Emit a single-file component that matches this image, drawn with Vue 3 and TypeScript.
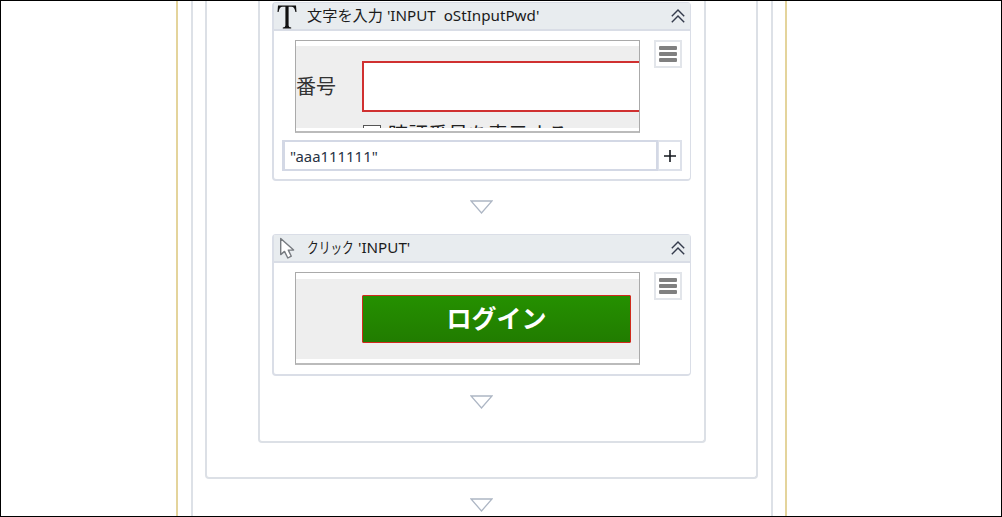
<script setup lang="ts">
interface Activity {
  id: string
  kind: 'type' | 'click'
  action: string
  target: string
  value?: string
}

const activities: Activity[] = [
  { id: 'a1', kind: 'type', action: '文字を入力', target: "'INPUT\u00a0 oStInputPwd'", value: '"aaa111111"' },
  { id: 'a2', kind: 'click', action: 'クリック', target: "'INPUT'" },
]
</script>

<template>
  <main class="viewport">
    <div class="scope">
      <div class="body">
        <section class="sequence">
          <div class="inner">
            <template v-for="a in activities" :key="a.id">
              <article class="card" :class="a.kind">
                <header class="head">
                  <svg v-if="a.kind === 'type'" class="icon" viewBox="0 0 24 28">
                    <path d="M3 3.5H21L21.5 10H20.4Q19.6 4.8 16.5 4.8H13.6V23.6Q13.6 25.4 16.2 25.5V26.5H7.8V25.5Q10.4 25.4 10.4 23.6V4.8H7.5Q4.4 4.8 3.6 10H2.5Z" fill="#111" />
                  </svg>
                  <svg v-else class="icon" viewBox="0 0 24 28">
                    <path d="M5.7 4.5V20.6L9.5 17.4L12.8 24L16.3 22.2L13.3 16.1H18.6Z" fill="#fff" stroke="#777b80" stroke-width="1.4" stroke-linejoin="round" />
                  </svg>
                  <h2 class="title"><span class="act">{{ a.action }}</span><span class="target">{{ a.target }}</span></h2>
                  <svg class="chevron" viewBox="0 0 14 14">
                    <path d="M.8 7.2L7 1L13.2 7.2M.8 13.2L7 7L13.2 13.2" fill="none" stroke="#343b4c" stroke-width="1.4" />
                  </svg>
                </header>
                <div class="content">
                  <div class="shot">
                    <div class="snippet">
                      <template v-if="a.kind === 'type'">
                        <div class="row">
                          <span class="label">番号</span>
                          <span class="field"></span>
                        </div>
                        <div class="option"><span class="check"></span><span class="option-text">暗証番号を表示する</span></div>
                      </template>
                      <div v-else class="login">ログイン</div>
                    </div>
                  </div>
                  <button class="menu" aria-label="menu"><i></i><i></i><i></i></button>
                </div>
                <div v-if="a.value" class="entry">
                  <div class="value">{{ a.value }}</div>
                  <button class="add" aria-label="add">
                    <svg viewBox="0 0 14 14"><path d="M7 1V13M1 7H13" stroke="#15181f" stroke-width="1.6" /></svg>
                  </button>
                </div>
              </article>
              <svg class="arrow" viewBox="0 0 23 14"><path d="M1 1H22L11.5 13Z" fill="#fff" stroke="#adb6c4" stroke-width="1.3" /></svg>
            </template>
          </div>
        </section>
        <svg class="arrow last" viewBox="0 0 23 14"><path d="M1 1H22L11.5 13Z" fill="#fff" stroke="#adb6c4" stroke-width="1.3" /></svg>
      </div>
    </div>
  </main>
</template>

<style>
body { margin: 0; background: #fff; }
</style>

<style scoped>
* { box-sizing: border-box; }
.viewport {
  width: 1002px;
  height: 517px;
  border: 1px solid #000;
  overflow: hidden;
  background: #fff;
  padding-left: 175px;
  font-family: "Noto Sans", "Noto Sans CJK JP", sans-serif;
}
.scope {
  width: 611px;
  height: 515px;
  border: solid #e4d49c;
  border-width: 0 2px;
  padding: 0 12px 0 13px;
}
.body {
  height: 515px;
  border: solid #dde1e7;
  border-width: 0 2px;
  padding: 0 13px 0 12px;
  display: flex;
  flex-direction: column;
  align-items: center;
}
.sequence {
  width: 553px;
  height: 478px;
  flex: none;
  border: 2px solid #dce0e6;
  border-top: 0;
  border-radius: 0 0 4px 4px;
  padding: 0 50px 0 51px;
}
.inner {
  width: 448px;
  height: 442px;
  border: 2px solid #dce0e6;
  border-top: 0;
  border-radius: 0 0 4px 4px;
  padding: 1px 13px 0 12px;
  display: flex;
  flex-direction: column;
  align-items: center;
}
.card {
  width: 419px;
  flex: none;
  border: 2px solid #dadee7;
  border-right-width: 1px;
  border-radius: 4px;
  background: #fff;
}
.card.type { height: 179px; border-top-width: 1px; }
.card.click { height: 142px; border-top-width: 1px; }
.head {
  height: 28px;
  border-bottom: 2px solid #d9dde6;
  background: #e8ecef;
  display: flex;
  align-items: center;
  padding: 0 5px 0 1px;
}
.icon { width: 24px; height: 28px; flex: none; }
.click .icon { margin-top: -1px; }
.title {
  flex: 1;
  margin: -2px 0 0 8px;
  display: flex;
  gap: 4px;
  font-size: 15.2px;
  line-height: 24px;
  font-weight: 400;
  color: #1b1b1b;
  white-space: pre;
}
.click .act { width: 47px; transform: scaleX(.77); transform-origin: left; }
.chevron { width: 14px; height: 14px; margin-top: 0; }
.content {
  display: flex;
  align-items: flex-start;
  justify-content: space-between;
  padding: 9px 8px 0 21px;
}
.shot {
  width: 345px;
  height: 93px;
  border: solid #aaa;
  border-width: 1px 1px 2px 1px;
  border-color: #aaa #aaa #bbb #aaa;
  padding: 5px 0 4px 0;
}
.snippet { height: 82px; background: #eee; overflow: hidden; }
.row { display: flex; align-items: center; padding-top: 15px; }
.label { width: 66px; font-size: 20px; color: #333; line-height: 50px; padding-top: 1px; }
.field { width: 277px; height: 51px; border: 2px solid #d03030; border-right: 0; background: #fff; }
.option { display: flex; padding: 13px 0 0 67px; }
.check { width: 18px; height: 16px; border: 1px solid #555; background: #fff; flex: none; }
.option-text { margin-left: 7px; font-size: 20px; line-height: 24px; margin-top: -2px; color: #222; white-space: nowrap; }
.click .shot { padding-top: 6px; }
.click .snippet { height: 80px; padding: 16px 0 0 66px; }
.login {
  width: 269px;
  height: 48px;
  border: 1px solid #d02a1c;
  border-radius: 1px;
  background: linear-gradient(#259000, #217c00);
  color: #fff;
  font-size: 25px;
  font-weight: 700;
  line-height: 45px;
  text-align: center;
}
.menu {
  width: 28px;
  height: 28px;
  border: 2px solid #e2e5ea;
  background: #fff;
  padding: 4px 3px;
  display: flex;
  flex-direction: column;
  justify-content: space-between;
}
.menu i { display: block; width: 18px; height: 4px; border-radius: 1px; background: #808080; }
.entry { display: flex; margin: 7px 8px 0 8px; height: 31px; }
.value {
  width: 376px;
  border: 2px solid #d3d8e5;
  border-left-width: 3px;
  padding-left: 5px;
  font-size: 14.9px;
  line-height: 29px;
  color: #273244;
}
.add {
  width: 24px;
  border: 2px solid #dde1ea;
  border-left-width: 1px;
  background: #fff;
  padding: 0;
  display: flex;
  align-items: center;
  justify-content: center;
}
.add svg { width: 14px; height: 14px; }
.arrow { width: 23px; height: 14px; flex: none; display: block; margin: 19px 0 20px; }
.last { margin: 19px 0 0; }
</style>
